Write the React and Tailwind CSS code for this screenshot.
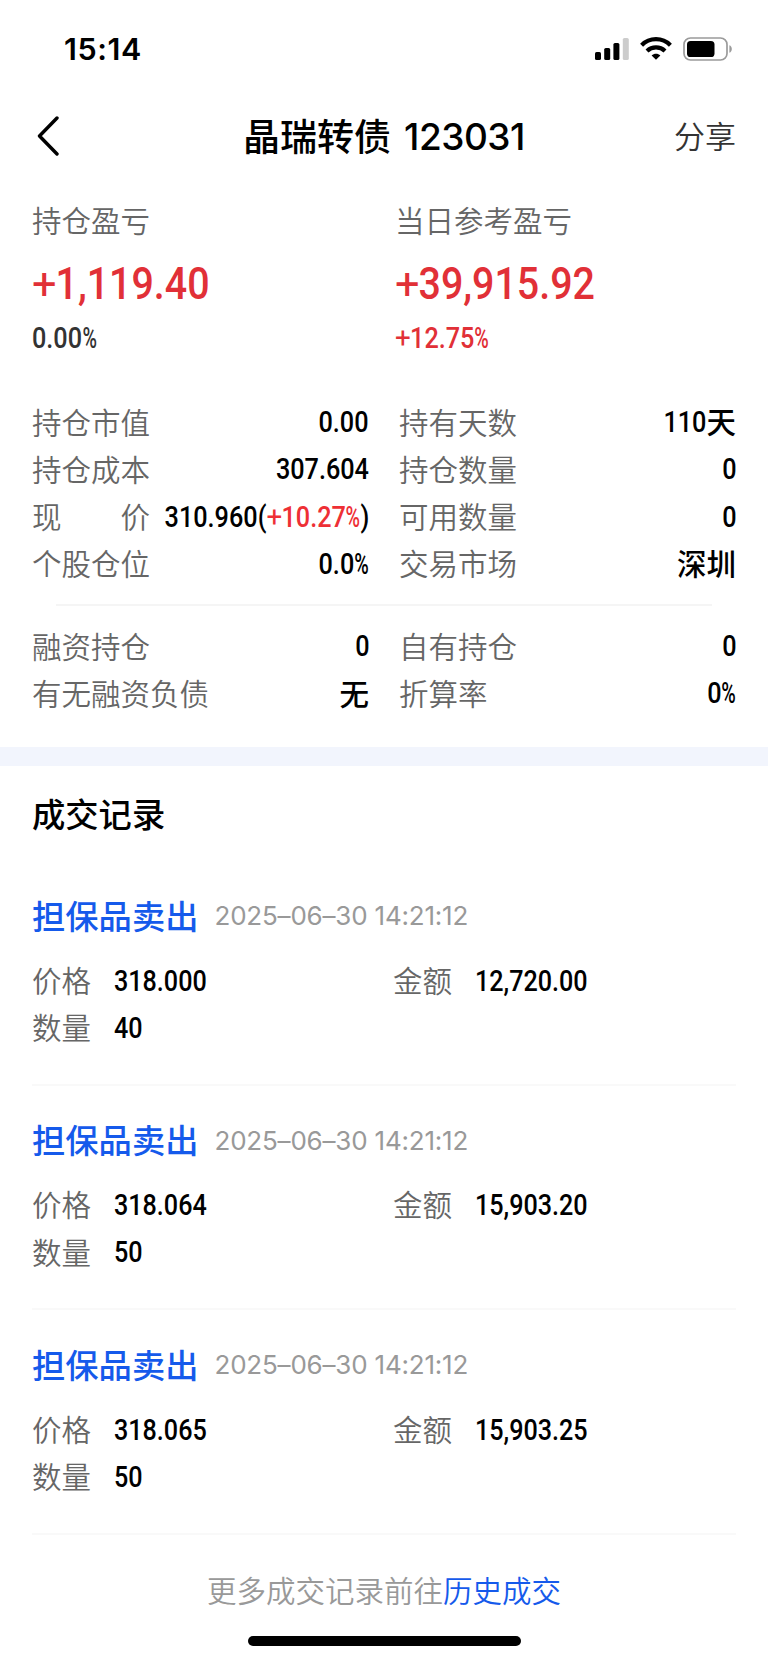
import React from "react";
import clsx from "clsx";

// =============================
// Data
// =============================
const POSITION_ROWS = [
  { label: "持仓市值", value: "0.00" },
  { label: "持有天数", value: "110", unit: "天" },
  { label: "持仓成本", value: "307.604" },
  { label: "持仓数量", value: "0" },
  { label: "现价", value: "310.960", change: "+10.27%", spread: true },
  { label: "可用数量", value: "0" },
  { label: "个股仓位", value: "0.0%" },
  { label: "交易市场", unit: "深圳" },
];
const MARGIN_ROWS = [
  { label: "融资持仓", value: "0" },
  { label: "自有持仓", value: "0" },
  { label: "有无融资负债", unit: "无" },
  { label: "折算率", value: "0%" },
];
const RECORDS = [
  { id: 1, type: "担保品卖出", time: "2025–06–30 14:21:12", price: "318.000", amount: "12,720.00", count: "40" },
  { id: 2, type: "担保品卖出", time: "2025–06–30 14:21:12", price: "318.064", amount: "15,903.20", count: "50" },
  { id: 3, type: "担保品卖出", time: "2025–06–30 14:21:12", price: "318.065", amount: "15,903.25", count: "50" },
];

// =============================
// Narrow numerals
// =============================
function Num({ children, className }) {
  return (
    <span className={clsx("inline-block whitespace-nowrap pt-[1px] font-['Roboto',sans-serif] font-medium", className)}>
      {children}
    </span>
  );
}

// Percent sign is narrower than the digits, plus sign is lighter and wider
function Figure({ text }) {
  const plus = text.startsWith("+");
  const percent = text.endsWith("%");
  return (
    <>
      {plus && <span className="mr-[0.03em] inline-block origin-left scale-x-[1.1] font-normal">+</span>}
      {text.slice(plus ? 1 : 0, percent ? -1 : undefined)}
      {percent && <span className="-mr-[4.5px] inline-block origin-left scale-x-[0.78]">%</span>}
    </>
  );
}

// =============================
// Status bar
// =============================
function StatusBar() {
  return (
    <div className="flex h-[98px] items-center justify-between pl-[64px] pr-[35px]">
      <span className="font-['Inter',sans-serif] text-[30.5px] font-semibold leading-none tracking-[0.6px]">15:14</span>
      <div className="flex items-center">
        <svg width="34" height="24" viewBox="0 0 34 24">
          <rect x="0" y="15" width="6" height="8" rx="1.6" />
          <rect x="9.2" y="11" width="6" height="12" rx="1.6" />
          <rect x="18.4" y="6" width="6" height="17" rx="1.6" />
          <rect x="27.8" y="1" width="6" height="22" rx="1.6" fill="#cccccc" />
        </svg>
        <svg className="ml-[11px]" width="32" height="24" viewBox="0 0 32 24">
          <g fill="none" stroke="#000" strokeWidth="4.2">
            <path d="M1.6 8.2C9.6 0.2 22.4 0.2 30.4 8.2" />
            <path d="M7 14C12 9.2 20 9.2 25 14" />
          </g>
          <path d="M11.6 18.4C14.2 16.2 17.8 16.2 20.4 18.4L16 22.8Z" />
        </svg>
        <svg className="ml-[11px]" width="50" height="24" viewBox="0 0 50 24">
          <rect x="1" y="1" width="43" height="22" rx="6.5" fill="none" stroke="#9b9b9b" strokeWidth="1.7" />
          <rect x="4" y="4" width="27.5" height="16" rx="3.6" />
          <path d="M46.4 8.2C49.6 9.4 49.6 14.6 46.4 15.8Z" fill="#9b9b9b" />
        </svg>
      </div>
    </div>
  );
}

// =============================
// Top navigation
// =============================
function NavBar() {
  return (
    <header className="grid h-[76px] grid-cols-[1fr_auto_1fr] items-center px-8">
      <svg className="ml-[5px]" width="22" height="40" viewBox="0 0 22 40" fill="none" stroke="#000" strokeWidth="3.4" strokeLinecap="round" strokeLinejoin="round">
        <path d="M20 2L2.5 20L20 38" />
      </svg>
      <h1 className="flex items-center gap-[13px] text-[37px] font-medium leading-none">
        <span className="pb-[2px]">晶瑞转债</span>
        <span className="font-['Inter',sans-serif] text-[37px] tracking-[-0.5px]">123031</span>
      </h1>
      <button className="justify-self-end pb-[3px] text-[31px] font-[350] leading-none text-[#333]">分享</button>
    </header>
  );
}

// =============================
// Profit summary
// =============================
function Profit({ label, value, percent, percentClass }) {
  return (
    <div>
      <div className="flex h-10 items-center pb-[1px] text-[29.5px] font-[350] text-[#666]">{label}</div>
      <div className="flex h-[86px] items-center text-[45px] text-[#e13037]">
        <Num className="origin-left scale-x-[0.875]"><Figure text={value} /></Num>
      </div>
      <div className={clsx("flex h-6 items-center text-[29px]", percentClass)}>
        <Num className="origin-left scale-x-[0.87]"><Figure text={percent} /></Num>
      </div>
    </div>
  );
}

function DetailRow({ row }) {
  return (
    <div className="flex h-[47.25px] items-center justify-between">
      <span className={clsx("shrink-0 whitespace-nowrap pb-[1.5px] text-[29.5px] font-[350] text-[#666]", row.spread && "flex w-[118px] justify-between")}>
        {row.spread ? row.label.split("").map((c) => <span key={c}>{c}</span>) : row.label}
      </span>
      <span className="flex min-w-0 items-center justify-end text-[29px]">
        {row.value && (
          <Num className="origin-right scale-x-[0.87]">
            <Figure text={row.value} />
            {row.change && <>(<span className="text-[#ee2f35]"><Figure text={row.change} /></span>)</>}
          </Num>
        )}
        {row.unit && <span className="pb-[2px] text-[29.5px] font-medium">{row.unit}</span>}
      </span>
    </div>
  );
}

function DetailGrid({ rows }) {
  return (
    <div className="grid grid-cols-2 gap-x-[30px] px-8">
      {rows.map((row) => <DetailRow key={row.label} row={row} />)}
    </div>
  );
}

// =============================
// Trade record
// =============================
function Field({ label, value }) {
  return (
    <div className="flex h-[47.25px] items-center">
      <span className="w-[82px] pb-[2px] text-[29.5px] font-[350] text-[#666]">{label}</span>
      <Num className="origin-left scale-x-[0.867] text-[29px]">{value}</Num>
    </div>
  );
}

function Record({ record }) {
  return (
    <article className="mx-8 h-[224.5px] border-b-2 border-[#f9f9f9] pt-[12px]">
      <div className="flex h-[84px] items-center">
        <h3 className="pb-[1px] text-[33.3px] font-medium text-[#155aeb]">{record.type}</h3>
        <time className="ml-[16px] pt-[2px] font-['Inter',sans-serif] text-[26px] tracking-[-0.2px] text-[#999]">{record.time}</time>
      </div>
      <div className="grid grid-cols-[361px_1fr]">
        <Field label="价格" value={record.price} />
        <Field label="金额" value={record.amount} />
        <Field label="数量" value={record.count} />
      </div>
    </article>
  );
}

export default function App() {
  return (
    <main className="h-[1663px] w-[768px] overflow-hidden bg-white font-['Noto_Sans_CJK_SC',sans-serif] leading-none text-black">
      <StatusBar />
      <NavBar />

      {/* Profit and loss */}
      <section className="grid grid-cols-[363px_1fr] px-8 pt-[26px]">
        <Profit label="持仓盈亏" value="+1,119.40" percent="0.00%" percentClass="text-[#333]" />
        <Profit label="当日参考盈亏" value="+39,915.92" percent="+12.75%" percentClass="text-[#e13037]" />
      </section>

      {/* Position details */}
      <section className="pt-[48.5px]">
        <DetailGrid rows={POSITION_ROWS} />
        <div className="mx-[56px] mb-[17px] mt-[16px] h-[2px] bg-[#f5f5f5]" />
        <DetailGrid rows={MARGIN_ROWS} />
      </section>
      <div className="mt-[29.5px] h-[19px] bg-[#f2f5fd]" />

      {/* Trade records */}
      <section>
        <h2 className="flex h-[95.5px] items-center px-8 pb-[2px] text-[33.3px] font-medium">成交记录</h2>
        {RECORDS.map((record) => <Record key={record.id} record={record} />)}
      </section>

      <footer className="flex flex-col items-center">
        <p className="flex h-[101px] items-end pb-[31px] text-[29.5px] font-[350] text-[#999]">
          更多成交记录前往<a className="text-[#155aeb]">历史成交</a>
        </p>
        <div className="h-[10px] w-[273px] rounded-full bg-black" />
      </footer>
    </main>
  );
}
